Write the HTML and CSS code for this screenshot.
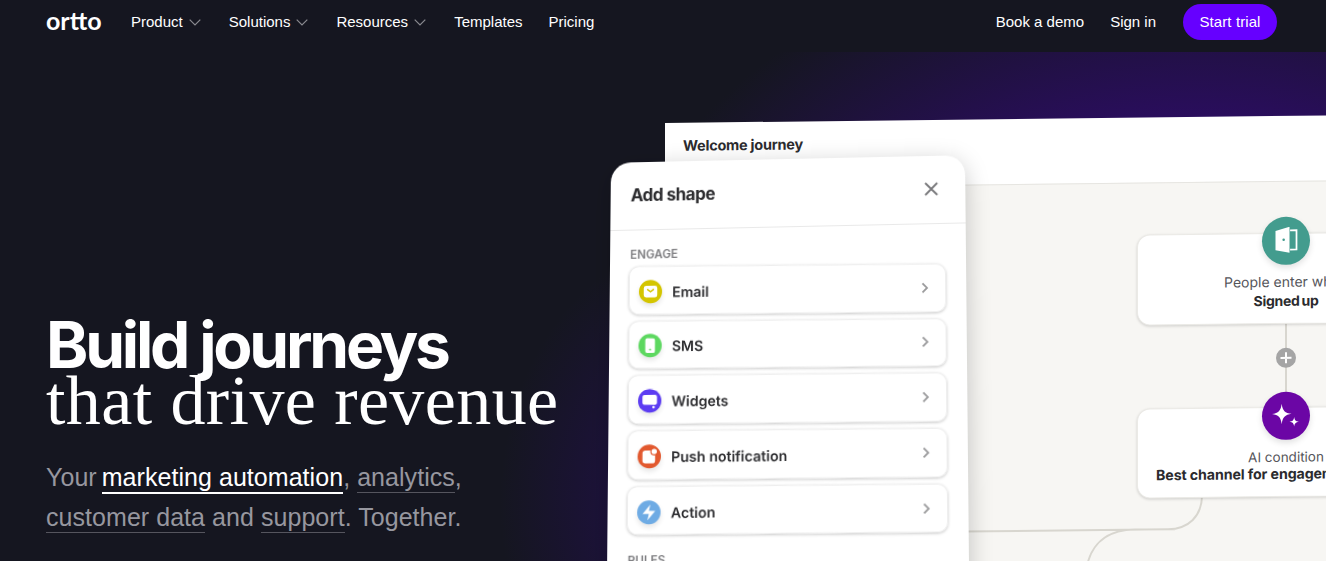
FILE: index.html
```html
<!DOCTYPE html>
<html lang="en">
<head>
<meta charset="utf-8">
<title>Ortto</title>
<link rel="stylesheet" href="styles.css">
</head>
<body>
<header class="nav">
  <a class="logo">ortto</a>
  <nav class="nav-main">
    <a class="nav-link">Product <svg class="caret" viewBox="0 0 12 7"><path d="M.7.7 6 6l5.3-5.3"/></svg></a>
    <a class="nav-link">Solutions <svg class="caret" viewBox="0 0 12 7"><path d="M.7.7 6 6l5.3-5.3"/></svg></a>
    <a class="nav-link">Resources <svg class="caret" viewBox="0 0 12 7"><path d="M.7.7 6 6l5.3-5.3"/></svg></a>
    <a class="nav-link">Templates</a>
    <a class="nav-link">Pricing</a>
  </nav>
  <div class="nav-side">
    <a class="nav-link">Book a demo</a>
    <a class="nav-link">Sign in</a>
    <a class="trial">Start trial</a>
  </div>
</header>
<main class="hero">
  <div class="copy">
    <h1 class="title"><span class="title-a">Build journeys</span><span class="title-b">that drive revenue</span></h1>
    <p class="sub">Your <a class="u on">marketing automation</a>, <a class="u">analytics</a>,<br><a class="u">customer data</a> and <a class="u">support</a>. Together.</p>
  </div>
  <div class="window">
    <div class="win-head">Welcome journey</div>
    <div class="canvas">
      <svg class="wires" viewBox="0 0 700 400"><path d="M621 140v70M537 312c0 22-14 34-34 34H300M420 401c0-35 16-55 50-55h40"/></svg>
      <div class="plus"><svg viewBox="0 0 20 20"><path d="M10 4.500v11M4.500 10h11"/></svg></div>
      <div class="node n1">
        <span class="badge teal"><svg viewBox="0 0 24 24"><path class="w" d="M3 3.500 15 0v22.300L3 20z"/><path class="o" d="M15.500 3h5.500v16.500h-5.500"/><circle class="d" cx="10" cy="11" r="1.100"/></svg></span>
        <p class="n-a">People enter when</p>
        <p class="n-b n-tight">Signed up</p>
      </div>
      <div class="node n2">
        <span class="badge violet"><svg viewBox="0 0 24 24"><path class="w" d="M8.300 1.500c.8 6 2.800 8 8.500 8.800-5.700.8-7.700 2.800-8.500 8.800-.8-6-2.800-8-8.500-8.800 5.700-.8 7.700-2.800 8.500-8.800zM19 13c.4 2.800 1.300 3.700 4 4.100-2.700.4-3.600 1.300-4 4.100-.4-2.800-1.300-3.700-4-4.100 2.700-.4 3.600-1.300 4-4.100z"/></svg></span>
        <p class="n-a n-small">AI condition</p>
        <p class="n-b n-left">Best channel for engagement</p>
      </div>
    </div>
  </div>
  <aside class="card">
    <div class="card-head">
      <span class="card-title">Add shape</span>
      <svg class="close" viewBox="0 0 14 14"><path d="M1 1l12 12M13 1 1 13"/></svg>
    </div>
    <div class="card-body">
      <p class="group">ENGAGE</p>
      <ul class="rows">
        <li class="row"><span class="ico yellow"><svg viewBox="0 0 24 24"><rect class="w" x="5" y="6" width="14" height="12" rx="2.500"/><path class="v" d="M8.500 9.500 12 12l3.500-2.500"/></svg></span>Email<svg class="chev" viewBox="0 0 8 12"><path d="M1.500 1.500 6 6l-4.500 4.500"/></svg></li>
        <li class="row"><span class="ico green"><svg viewBox="0 0 24 24"><rect class="w" x="7" y="4.500" width="10" height="15" rx="2"/><circle class="gd" cx="12" cy="16" r="1"/></svg></span>SMS<svg class="chev" viewBox="0 0 8 12"><path d="M1.500 1.500 6 6l-4.500 4.500"/></svg></li>
        <li class="row"><span class="ico indigo"><svg viewBox="0 0 24 24"><rect class="w" x="4.500" y="6" width="15" height="10" rx="2"/><circle class="w" cx="16" cy="18.500" r="1.300"/></svg></span>Widgets<svg class="chev" viewBox="0 0 8 12"><path d="M1.500 1.500 6 6l-4.500 4.500"/></svg></li>
        <li class="row"><span class="ico orange"><svg viewBox="0 0 24 24"><rect class="w" x="5" y="6" width="13" height="13" rx="3"/><circle class="or" cx="17" cy="7" r="4"/><circle class="w" cx="17" cy="7" r="2.800"/></svg></span>Push notification<svg class="chev" viewBox="0 0 8 12"><path d="M1.500 1.500 6 6l-4.500 4.500"/></svg></li>
        <li class="row"><span class="ico sky"><svg viewBox="0 0 24 24"><path class="w" d="M13.500 4 12 10.500h6.500L10.500 20l1.500-6.500H5.500z"/></svg></span>Action<svg class="chev" viewBox="0 0 8 12"><path d="M1.500 1.500 6 6l-4.500 4.500"/></svg></li>
      </ul>
      <p class="group rules">RULES</p>
    </div>
  </aside>
</main>
</body>
</html>
```
FILE: styles.css
```css
* { box-sizing: border-box; }
html, body { margin: 0; height: 561px; overflow: hidden; }
body { background: #151620; color: #fff; font-family: "Liberation Sans", Arial, sans-serif; }
a { color: inherit; text-decoration: none; }
p, h1, ul { margin: 0; padding: 0; }

.nav { display: flex; align-items: center; height: 52px; padding: 4px 49px 12px 46px; font-size: 15px; }
.logo { width: 85px; font-family: Lato, sans-serif; font-weight: 700; font-size: 25px; line-height: 32px; padding-bottom: 4px; }
.nav-main { display: flex; gap: 26px; }
.nav-link { display: flex; align-items: center; gap: 6px; white-space: nowrap; padding-bottom: 2px; }
.caret { width: 12px; height: 7px; margin: 2px 2px 0 0; fill: none; stroke: #8a8a90; stroke-width: 1.200; }
.nav-side { display: flex; align-items: center; gap: 26px; margin-left: auto; }
.trial { display: flex; align-items: center; justify-content: center; height: 36px; padding-bottom: 2px; border-radius: 18px; background: #6600ff; margin-left: 1px; width: 94px; letter-spacing: .1px; }

.hero { position: relative; height: 509px; overflow: hidden;
  background:
    radial-gradient(ellipse 200px 260px at 700px 450px, #220e50 0, rgba(34,14,80,0) 100%),
    radial-gradient(ellipse 650px 460px at 1200px 300px, #2c0c62 0, #2a0d5e 50%, #151620 92%); }
.copy { padding: 265px 0 0 46px; }
.title { display: flex; flex-direction: column; line-height: 56px; font-weight: 400; }
.title-a { font-family: Inter, sans-serif; font-weight: 700; font-size: 64px; letter-spacing: -3.200px; }
.title-b { font-family: "Liberation Serif", serif; font-size: 70px; letter-spacing: .4px; }
.sub { margin-top: 28px; font-size: 25px; line-height: 40px; color: #97979f; letter-spacing: .05px; }
.u { border-bottom: 1px solid #55555e; padding-bottom: 1px; }
.on { color: #fff; border-bottom: 2px solid #fff; margin-left: -2px; }

.window { position: absolute; left: 665px; top: 71px; width: 900px; height: 560px; background: #fff;
  transform-origin: 0 0; transform: matrix(1, -.0115, 0, 1, 0, 0); color: #2b2b2e; font-family: Inter, sans-serif; }
.win-head { height: 65px; padding: 14px 18px; font-size: 14.500px; font-weight: 700; letter-spacing: -.25px; line-height: 17px; }
.canvas { position: relative; height: 495px; background: #f7f6f3; border-top: 1px solid #e6e5e1; }
.wires { position: absolute; left: 0; top: 0; width: 700px; height: 400px; fill: none; stroke: #d8d6cf; stroke-width: 2; }
.plus { position: absolute; left: 611px; top: 166px; width: 20px; height: 20px; border-radius: 50%; background: #a5a5a5; }
.plus svg { display: block; fill: none; stroke: #fff; stroke-width: 2; }
.node { position: absolute; background: #fff; border-radius: 13px; border: 1px solid #ebeae6; box-shadow: 0 1px 3px rgba(0,0,0,.16); text-align: center; font-size: 14px; line-height: 18px; }
.n1 { left: 472px; top: 51px; width: 298px; height: 91px; padding-top: 39px; }
.n2 { left: 472px; top: 225px; width: 298px; height: 90px; padding-top: 40px; }
.n-a { color: #55555a; }
.n-small { font-size: 13.500px; }
.n-b { font-weight: 700; font-size: 14.200px; letter-spacing: -.1px; color: #2b2b2e; white-space: nowrap; }
.n-tight { font-size: 14px; letter-spacing: -.3px; word-spacing: -1px; margin-top: 1px; }
.n-left { text-align: left; padding-left: 18px; margin-top: -1px; }
.badge { position: absolute; left: 124px; top: -17px; width: 48px; height: 48px; border-radius: 50%; display: flex; align-items: center; justify-content: center; box-shadow: 0 3px 6px rgba(0,0,0,.12); }
.n2 .badge { top: -16px; }
.badge svg { width: 28px; height: 28px; }
.teal { background: #439c8e; }
.violet { background: #6b06a5; }
.w { fill: #fff; }
.o { fill: none; stroke: #fff; stroke-width: 1.500; }
.d { fill: #439c8e; }

.card { position: absolute; left: 611px; top: 107px; width: 354px; height: 480px; background: #fff; border-radius: 20px 20px 0 0;
  transform-origin: 177px 0; transform: matrix3d(1, -.0215, 0, 0, 0, 1, 0, -.000055, 0, 0, 1, 0, 0, 0, 0, 1); box-shadow: 0 6px 24px rgba(0,0,0,.22); color: #2b2b2e; font-family: Inter, sans-serif; }
.card-head { display: flex; align-items: center; justify-content: space-between; height: 68px; padding: 0 27px 2px 20px; border-bottom: 1px solid #e9e9e9; }
.card-title { font-size: 17px; font-weight: 700; letter-spacing: -.5px; }
.close { width: 14px; height: 14px; fill: none; stroke: #77777a; stroke-width: 1.800; }
.card-body { padding: 17px 20px 0 19px; }
.group { font-size: 11.500px; font-weight: 600; line-height: 14px; color: #7d7d80; padding-left: 1px; }
.rows { list-style: none; display: flex; flex-direction: column; gap: 6.200px; margin-top: 4px; transform-origin: 0 0; transform: matrix(1, .0135, 0, 1, 0, 0); }
.row { display: flex; align-items: center; gap: 10px; height: 47.500px; padding: 3px 16px 0 9px; border-radius: 10px; border: 1px solid #eeeeee; box-shadow: 0 1px 3px rgba(0,0,0,.22); font-size: 14px; font-weight: 600; }
.rules { margin-top: 18px; }
.ico { width: 23px; height: 23px; border-radius: 50%; display: flex; align-items: center; justify-content: center; box-shadow: 0 3px 5px rgba(0,0,0,.1); }
.ico svg { width: 23px; height: 23px; }
.chev { width: 8px; height: 12px; margin-left: auto; margin-top: -3px; fill: none; stroke: #9a9a9c; stroke-width: 1.800; }
.yellow { background: #d4c500; }
.green { background: #5dd860; }
.indigo { background: #5c3cf2; }
.orange { background: #e2592f; }
.sky { background: #6eabe4; }
.v { fill: none; stroke: #d4c500; stroke-width: 1.500; }
.gd { fill: #5dd860; }
.or { fill: #e2592f; }
```
